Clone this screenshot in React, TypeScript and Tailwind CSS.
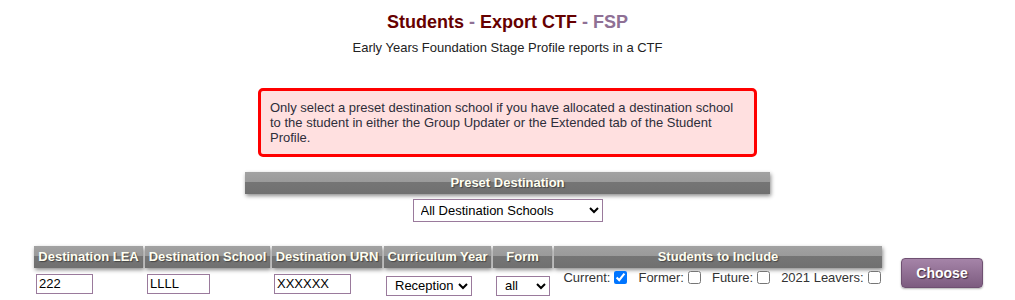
import React from "react";

const FONT = { fontFamily: '"Liberation Sans", Arial, sans-serif' };

const headCell =
  "h-[22px] px-[3px] text-[13px] font-bold text-[#fffff2] text-center whitespace-nowrap bg-[linear-gradient(to_bottom,#a2a2a2_0%,#9a9a9a_45%,#757575_46%,#707070_100%)] shadow-[1px_2px_4px_rgba(0,0,0,0.45)] [text-shadow:1px_1px_1px_#444]";

const inputCls =
  "h-[20px] border border-[#9a7a9c] bg-white px-[2px] text-[13px] text-black outline-none";

export default function App() {
  return (
    <div className="min-h-[300px] bg-white text-[#333]" style={FONT}>
      <h1 className="pt-[11px] text-center text-[18px] font-bold leading-[22px] text-[#660000]">
        Students<span className="text-[#8f7095]"> - </span>Export CTF
        <span className="text-[#8f7095]"> - FSP</span>
      </h1>
      <p className="mt-[7px] text-center text-[13px] leading-[15px] text-[#222]">
        Early Years Foundation Stage Profile reports in a CTF
      </p>

      <div className="mx-auto mt-[33px] w-[499px] rounded-[5px] border-[3px] border-[#ff0000] bg-[#ffe0e0] px-[9px] py-[9px] text-[13px] leading-[15px] text-[#2e2e3a]">
        Only select a preset destination school if you have allocated a destination school
        to the student in either the Group Updater or the Extended tab of the Student
        Profile.
      </div>

      <div className="mx-auto mt-[15px] w-[525px]">
        <div className={`${headCell} leading-[22px]`}>Preset Destination</div>
        <div className="mt-[5px] flex justify-center">
          <select
            defaultValue="all"
            className="h-[23px] w-[190px] border border-[#9a7a9c] bg-white pl-[3px] text-[13px] text-black"
          >
            <option value="all">All Destination Schools</option>
          </select>
        </div>
      </div>

      <div className="mt-[22px] flex items-center justify-center">
        <table className="border-separate border-spacing-[2px]">
          <thead>
            <tr>
              <th className={`${headCell} w-[109px]`}>Destination LEA</th>
              <th className={`${headCell} w-[125px]`}>Destination School</th>
              <th className={`${headCell} w-[110px]`}>Destination URN</th>
              <th className={`${headCell} w-[107px]`}>Curriculum Year</th>
              <th className={`${headCell} w-[59px]`}>Form</th>
              <th className={`${headCell} w-[328px]`}>Students to Include</th>
            </tr>
          </thead>
          <tbody>
            <tr className="align-top">
              <td className="pl-[2px] pt-[1px]">
                <input defaultValue="222" className={`${inputCls} w-[57px]`} />
              </td>
              <td className="pl-[2px] pt-[1px]">
                <input defaultValue="LLLL" className={`${inputCls} w-[63px]`} />
              </td>
              <td className="pl-[2px] pt-[1px]">
                <input defaultValue="XXXXXX" className={`${inputCls} w-[77px]`} />
              </td>
              <td className="pl-[2px] pt-[3px]">
                <select
                  defaultValue="reception"
                  className="h-[20px] w-[86px] border border-[#9a7a9c] bg-white pl-[4px] text-[13px] text-black"
                >
                  <option value="reception">Reception</option>
                </select>
              </td>
              <td className="pl-[3px] pt-[3px]">
                <select
                  defaultValue="all"
                  className="h-[20px] w-[54px] border border-[#9a7a9c] bg-white pl-[4px] text-[13px] text-black"
                >
                  <option value="all">all</option>
                </select>
              </td>
              <td>
                <div className="flex items-center justify-center gap-[11px] pl-[8px] text-[13px] leading-[15px] text-[#333]">
                  <label className="flex items-center gap-[4px]">
                    Current:
                    <input type="checkbox" defaultChecked className="m-0 h-[13px] w-[13px]" />
                  </label>
                  <label className="flex items-center gap-[4px]">
                    Former:
                    <input type="checkbox" className="m-0 h-[13px] w-[13px]" />
                  </label>
                  <label className="flex items-center gap-[4px]">
                    Future:
                    <input type="checkbox" className="m-0 h-[13px] w-[13px]" />
                  </label>
                  <label className="flex items-center gap-[4px]">
                    2021 Leavers:
                    <input type="checkbox" className="m-0 h-[13px] w-[13px]" />
                  </label>
                </div>
              </td>
            </tr>
          </tbody>
        </table>
        <button
          type="button"
          className="ml-[17px] mt-[3px] h-[30px] w-[82px] rounded-[4px] border border-[#6f5072] bg-[linear-gradient(to_bottom,#a584a8,#7d5c80)] text-[14px] font-bold text-white shadow-[0_1px_2px_rgba(0,0,0,0.3)] [text-shadow:1px_1px_1px_#3a2a3b]"
        >
          Choose
        </button>
      </div>
    </div>
  );
}
